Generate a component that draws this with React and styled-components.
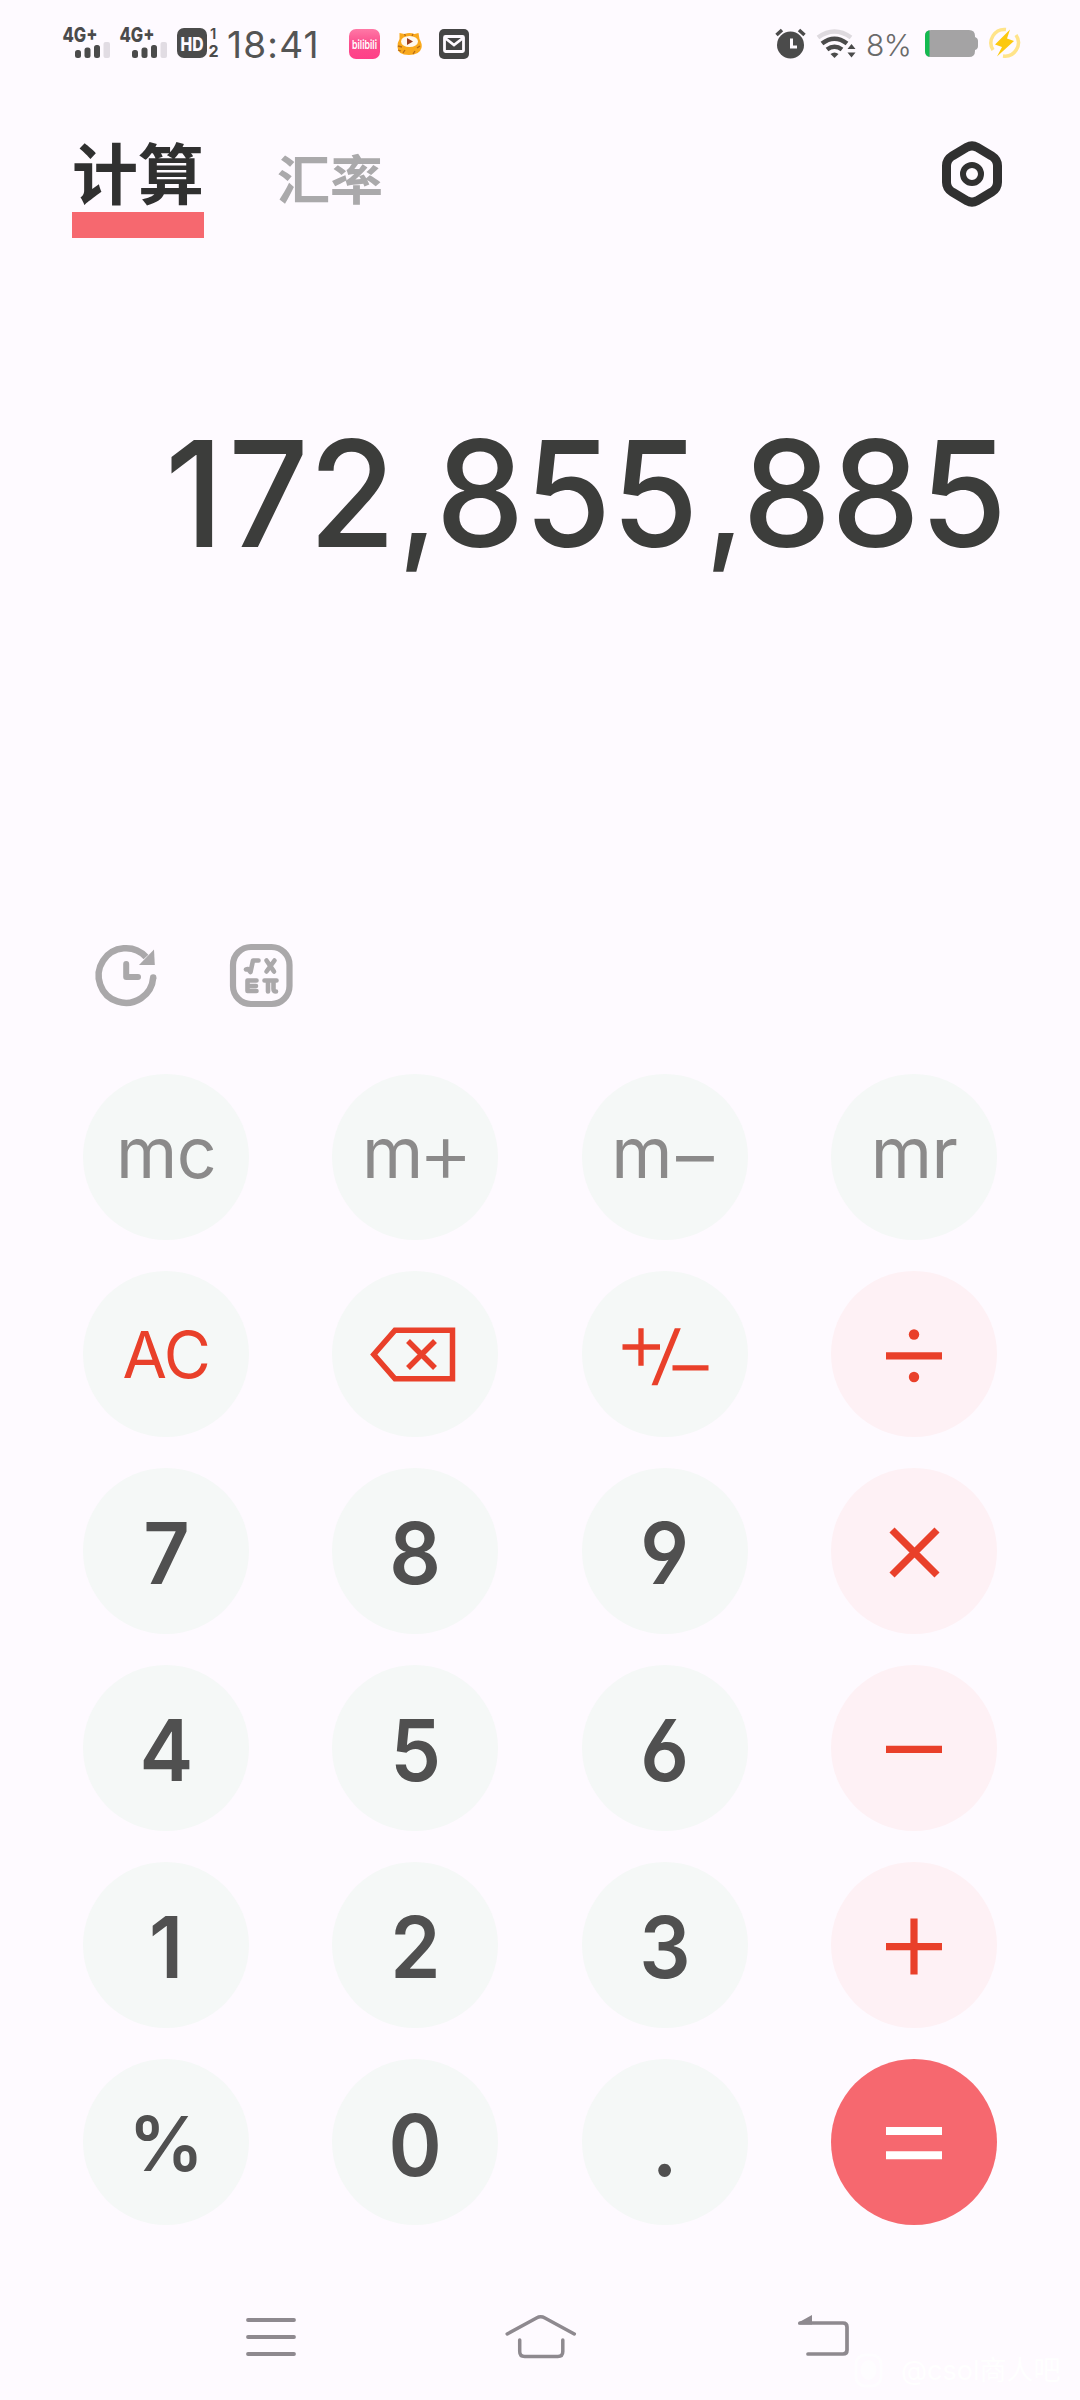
import React from 'react';
import styled, { createGlobalStyle } from 'styled-components';

const GlobalStyle = createGlobalStyle`
  * {
    box-sizing: border-box;
  }

  body {
    margin: 0;
    background: #fefaff;
    font-family: Inter, 'Noto Sans CJK SC', sans-serif;
  }

  svg {
    display: block;
    flex-shrink: 0;
    overflow: visible;
  }
`;

const Screen = styled.div`
  display: flex;
  flex-direction: column;
  width: 1080px;
  height: 2400px;
  overflow: hidden;
  background: #fefaff;
`;

const StatusBar = styled.header`
  display: flex;
  justify-content: space-between;
  height: 88px;
  padding: 0 59px 0 62px;
  color: #4b4b4b;
`;

const StatusGroup = styled.div`
  display: flex;
  align-items: center;
  height: 88px;
`;

const Clock = styled.span`
  width: 125px;
  padding: 2px 0 0 3px;
  font-size: 37px;
  line-height: 86px;
  letter-spacing: 1.2px;
  white-space: nowrap;
  color: #545454;
`;

const BatteryText = styled.span`
  width: 67px;
  padding: 2px 0 0 9px;
  font-size: 30px;
  font-weight: 300;
  line-height: 88px;
  letter-spacing: -0.5px;
  white-space: nowrap;
  color: #6a6a6a;
`;

const TopBar = styled.div`
  display: flex;
  justify-content: space-between;
  height: 152px;
  padding: 0 78px 0 72px;
`;

const Tabs = styled.nav`
  display: flex;
  gap: 73px;
`;

const Tab = styled.div`
  height: 150px;
  padding-top: ${({ $active }) => ($active ? '44px' : '56px')};
  font-size: ${({ $active }) => ($active ? '66px' : '53px')};
  font-weight: 700;
  line-height: ${({ $active }) => ($active ? '80px' : '74px')};
  color: ${({ $active }) => ($active ? '#303030' : '#aaa9ab')};
  border-bottom: ${({ $active }) => ($active ? '26px solid #f6686f' : '0')};
`;

const ActiveLabel = styled.span`
  display: block;
  height: 80px;
  line-height: 86px;
`;

const SettingsButton = styled.div`
  padding-top: 53px;
`;

const Display = styled.div`
  height: 704px;
  padding: 164px 0 0 0;
  margin-right: 73px;
  font-size: 147.5px;
  font-weight: 450;
  line-height: 180px;
  text-align: right;
  white-space: nowrap;
  color: #3c3d3b;
  transform: scaleX(0.955);
  transform-origin: right center;
`;

const LeadDigit = styled.span`
  margin-right: 5px;
`;

const Comma = styled.span`
  margin: 0 -2px 0 ${({ $gap }) => $gap}px;
  font-size: 0.92em;
  line-height: 0;
`;

const Tools = styled.div`
  display: flex;
  gap: 73px;
  height: 129.6px;
  padding-left: 95px;
`;

const Keypad = styled.div`
  display: grid;
  grid-template-columns: repeat(4, 166px);
  grid-auto-rows: 166px;
  column-gap: 83.3px;
  row-gap: 31.1px;
  width: 914px;
  margin-left: 83.2px;
`;

const keyBackgrounds = {
  plain: '#f5f8f7',
  operator: '#fef1f5',
  equals: '#f6686f',
};

const Key = styled.button`
  display: flex;
  align-items: center;
  justify-content: center;
  width: 166px;
  height: 166px;
  padding: 0;
  border: 0;
  border-radius: 50%;
  font-family: inherit;
  color: ${({ $kind }) => ($kind === 'equals' ? '#fff' : '#e9402a')};
  background: ${({ $kind }) => keyBackgrounds[$kind]};
`;

const MemoryLabel = styled.span`
  padding-bottom: 8px;
  font-size: 70px;
  font-weight: 400;
  line-height: 84px;
  letter-spacing: -0.5px;
  white-space: nowrap;
  color: #8b8a8a;
`;

const Sign = styled.span`
  margin: 0 -4px 0 -5px;
  font-size: 1.22em;
  font-weight: 300;
  line-height: 0;
  vertical-align: -5px;
`;

const ClearLabel = styled.span`
  padding-top: 3px;
  font-size: 64.5px;
  font-weight: 400;
  line-height: 80px;
  letter-spacing: -1px;
`;

const DigitLabel = styled.span`
  padding-top: 7px;
  font-size: 85px;
  font-weight: 600;
  line-height: 104px;
  font-feature-settings: 'cv03', 'cv04';
  color: #505050;
  transform: scaleX(0.95);
`;

const PercentLabel = styled(DigitLabel)`
  padding-top: 4px;
  font-size: 75px;
  font-weight: 600;
  transform: none;
`;

const NavBar = styled.footer`
  display: flex;
  align-items: flex-start;
  height: 175px;
  padding: 84px 0 0 242px;
`;

const NavItem = styled.div`
  flex-shrink: 0;
  width: ${({ $width }) => $width}px;
`;

const Watermark = styled.div`
  display: flex;
  align-items: center;
  gap: 18px;
  padding-top: 42px;
  font-size: 27px;
  line-height: 40px;
  white-space: nowrap;
  color: #fff;
`;

const Signal = () => (
  <svg width="57" height="36" viewBox="0 0 57 36">
    <text x="0.5" y="16" fontSize="20" fontWeight="800" textLength="35" lengthAdjust="spacingAndGlyphs" fill="#4b4b4b">4G+</text>
    <rect x="13" y="24" width="6" height="8" rx="2.5" fill="#4b4b4b" />
    <rect x="22.5" y="21.5" width="6" height="10.5" rx="2.5" fill="#4b4b4b" />
    <rect x="32" y="19" width="6" height="13" rx="2.5" fill="#4b4b4b" />
    <rect x="41.5" y="16" width="6.5" height="16" rx="2" fill="#e1dce3" />
  </svg>
);

const HdBadge = () => (
  <svg width="48" height="40" viewBox="0 0 48 40">
    <rect x="1" y="4" width="30" height="30" rx="7" fill="#4b4b4b" />
    <text x="4.5" y="26.5" fontSize="19" fontWeight="800" textLength="23" lengthAdjust="spacingAndGlyphs" fill="#fefaff">HD</text>
    <text x="34" y="15" fontSize="15" fontWeight="600" fill="#4b4b4b">1</text>
    <text x="32.5" y="33" fontSize="16" fontWeight="700" fill="#4b4b4b">2</text>
  </svg>
);

const Bilibili = () => (
  <svg width="47" height="32" viewBox="0 0 47 32">
    <defs>
      <linearGradient id="pink" x1="0" y1="0" x2="0" y2="1">
        <stop offset="0" stopColor="#ff78a6" />
        <stop offset="0.5" stopColor="#fb4d8c" />
        <stop offset="1" stopColor="#ff3f88" />
      </linearGradient>
    </defs>
    <rect x="0" y="1" width="31" height="30" rx="7" fill="url(#pink)" />
    <text x="3" y="20.5" fontSize="12" fontWeight="600" textLength="25" lengthAdjust="spacingAndGlyphs" fill="#fff">bilibili</text>
  </svg>
);

const Cat = () => (
  <svg width="43" height="32" viewBox="0 0 43 32">
    <path d="M3.5 5l5 1q5-2 10 0l4-1 1 6q3 5 2 9-2 7-12.5 7-11.5 0-11.5-8 0-5 2-8z" fill="#f9a91e" />
    <path d="M2 18l4 1M2 22l3 1M24 18l-3 2M7 25l2-3M17 26l2-3M8.5 6l1 2M17 6l-1 2" stroke="#b56a17" strokeWidth="1.3" />
    <ellipse cx="13.5" cy="13.5" rx="8.5" ry="5.5" fill="#fff8ef" />
    <path d="M11 10l6 3.5-6 3.5z" fill="#9b3d20" />
  </svg>
);

const Mail = () => (
  <svg width="31" height="32" viewBox="0 0 31 32">
    <rect x="0" y="1" width="30" height="30" rx="5" fill="#454545" />
    <rect x="5.5" y="8.5" width="19" height="15" rx="1" fill="none" stroke="#fefaff" strokeWidth="2.8" />
    <path d="M6 10l9 7 9-7" fill="none" stroke="#fefaff" strokeWidth="2.8" />
  </svg>
);

const Alarm = () => (
  <svg width="42" height="32" viewBox="0 0 42 32">
    <circle cx="15.5" cy="17" r="13.5" fill="#4b4b4b" />
    <path d="M1.5 7l5.5-5M29.5 7L24 2" stroke="#4b4b4b" strokeWidth="3.5" />
    <path d="M16.5 10.5V19H22" fill="none" stroke="#fefaff" strokeWidth="3" />
  </svg>
);

const Wifi = () => (
  <svg width="40" height="32" viewBox="0 0 40 32">
    <path d="M1 9.5Q17.5-2.5 34 9.5" fill="none" stroke="#dedadf" strokeWidth="4.5" />
    <path d="M5 15.5Q17.5 6 30 15.5" fill="none" stroke="#4b4b4b" strokeWidth="4.5" />
    <path d="M10 21.5Q17.5 16 25 21.5" fill="none" stroke="#4b4b4b" strokeWidth="4.5" />
    <path d="M13.5 26q4-3 8 0l-4 4z" fill="#4b4b4b" />
    <path d="M34.5 16l4 5h-8zM34.5 29.5l4-5h-8z" fill="#4b4b4b" />
  </svg>
);

const Battery = () => (
  <svg width="65" height="32" viewBox="0 0 65 32">
    <path d="M7 2h38q6 0 6 6v1q3 1 3 4v5q0 3-3 4v1q0 6-6 6H7q-6 0-6-6V8q0-6 6-6z" fill="#a4a3a4" />
    <path d="M5.5 2.2V28.8Q1 28 1 23V8q0-5 4.5-5.8z" fill="#13ba50" />
  </svg>
);

const Bolt = () => (
  <svg width="32" height="32" viewBox="0 0 32 32">
    <path d="M17 1.5A13.5 13.5 0 0 0 4 22M27 7A13.5 13.5 0 0 1 14 28" fill="none" stroke="#ffe48a" strokeWidth="3.5" />
    <path d="M21 1.500L6 16.500l7 2.500-5 9.500 17-15.500-7-2.500z" fill="#fcc90f" />
  </svg>
);

const Settings = () => (
  <svg width="60" height="68" viewBox="0 0 60 68">
    <path
      d="M25 6.2q5-2.6 10 0l14.5 8.6q6 3.8 6 10v16.400q0 6.2-6 10L35 59.8q-5 2.6-10 0L10.5 51.2q-6-3.8-6-10V24.8q0-6.2 6-10z"
      fill="none"
      stroke="#303030"
      strokeWidth="9"
    />
    <circle cx="30" cy="33" r="9" fill="none" stroke="#303030" strokeWidth="6" />
  </svg>
);

const History = () => (
  <svg width="62" height="64" viewBox="0 0 62 64">
    <path d="M58.2 33.5A27.3 27.3 0 1 1 51 13" fill="none" stroke="#aaa8aa" strokeWidth="6.5" />
    <circle cx="58.2" cy="33.5" r="3.2" fill="#aaa8aa" />
    <path d="M59 5.5L59.8 21H44z" fill="#aaa8aa" />
    <path d="M31.2 20v13H43" fill="none" stroke="#aaa8aa" strokeWidth="6" strokeLinecap="round" strokeLinejoin="round" />
  </svg>
);

const Formula = () => (
  <svg width="64" height="64" viewBox="0 0 64 64">
    <rect x="3" y="3" width="56.5" height="57" rx="18" fill="none" stroke="#aaa8aa" strokeWidth="6.2" />
    <g fill="none" stroke="#aaa8aa" strokeWidth="4.6" strokeLinecap="round" strokeLinejoin="round">
      <path d="M16 25.5l2-.5 2.5 3 2.5-11.5h5.5" />
      <path d="M36.5 16.5l7.5 11M44.500 16.5l-8 11" />
      <path d="M26.500 36.500h-9v10.500h9M17.500 42h8.500" />
      <path d="M34.5 36.5h12M38 37v10.5M43.5 37v8q0 2.5 2.500 2.5" />
    </g>
  </svg>
);

const Backspace = () => (
  <svg width="166" height="166" viewBox="0 0 166 166" fill="none" stroke="currentColor" strokeWidth="5.5">
    <path d="M63 59.2h57.5v48.6H63L41.8 83.5z" />
    <path d="M76 70l27 27M103 70L76 97" />
  </svg>
);

const PlusMinus = () => (
  <svg width="166" height="166" viewBox="0 0 166 166" fill="none" stroke="currentColor" strokeWidth="5.3">
    <path d="M40.5 76H78M59 57.2v37.6" />
    <path d="M90.5 96.8h36" />
    <path d="M92.8 57.2h6l-23.3 57h-6z" fill="currentColor" stroke="none" />
  </svg>
);

const operatorPaths = {
  divide: 'M55 84.8h56',
  multiply: 'M61 62l45 45M106 62L61 107',
  minus: 'M55 84.3h56',
  plus: 'M55 84.6h56M83 56.6v56',
  equals: 'M55 72h56M55 96.3h56',
};

const Operator = ({ name }) => (
  <svg width="166" height="166" viewBox="0 0 166 166" fill="none" stroke="currentColor" strokeWidth={name === 'equals' ? 8 : 7.2}>
    <path d={operatorPaths[name]} />
    {name === 'divide' && (
      <g fill="currentColor" stroke="none">
        <circle cx="83" cy="63.5" r="5.2" />
        <circle cx="83" cy="106" r="5.2" />
      </g>
    )}
  </svg>
);

const Menu = () => (
  <svg width="60" height="60" viewBox="0 0 60 60" stroke="#8e898f" strokeWidth="3.8" strokeLinecap="round">
    <path d="M6 11h46M6 28h46M6 45h46" />
  </svg>
);

const Home = () => (
  <svg width="80" height="60" viewBox="0 0 80 60" fill="none" stroke="#8e898f" strokeWidth="3.5" strokeLinecap="round">
    <path d="M6.2 25L35.5 9q4.2-2.3 8.4 0L73.3 25" />
    <path d="M18.7 31v11.5q0 5 5 5h33.1q5 0 5-5V31" />
  </svg>
);

const Back = () => (
  <svg width="60" height="60" viewBox="0 0 60 60">
    <path d="M8 14h43q4 0 4 4v23q0 4-4 4H16" fill="none" stroke="#8e898f" strokeWidth="3.7" strokeLinecap="round" />
    <path d="M20 6v9.5H6.5q-1-1 0-2z" fill="#8e898f" />
  </svg>
);

const WatermarkLogo = () => (
  <svg width="29" height="36" viewBox="0 0 29 36" opacity="0.6">
    <rect x="2" y="2" width="25" height="31" rx="9" fill="none" stroke="#fff" strokeWidth="3" />
    <ellipse cx="14.5" cy="17" rx="8" ry="10" fill="#fff" />
  </svg>
);

const App = () => {
  return (
    <>
      <GlobalStyle />
      <Screen>
        <StatusBar>
          <StatusGroup>
            <Signal />
            <Signal />
            <HdBadge />
            <Clock>18:41</Clock>
            <Bilibili />
            <Cat />
            <Mail />
          </StatusGroup>
          <StatusGroup>
            <Alarm />
            <Wifi />
            <BatteryText>8%</BatteryText>
            <Battery />
            <Bolt />
          </StatusGroup>
        </StatusBar>

        <TopBar>
          <Tabs>
            <Tab $active><ActiveLabel>计算</ActiveLabel></Tab>
            <Tab>汇率</Tab>
          </Tabs>
          <SettingsButton>
            <Settings />
          </SettingsButton>
        </TopBar>

        <Display>
          <LeadDigit>1</LeadDigit>72<Comma $gap={3}>,</Comma>855<Comma $gap={7}>,</Comma>885
        </Display>

        <Tools>
          <History />
          <Formula />
        </Tools>

        <Keypad>
          <Key $kind="plain"><MemoryLabel>mc</MemoryLabel></Key>
          <Key $kind="plain"><MemoryLabel>m<Sign>+</Sign></MemoryLabel></Key>
          <Key $kind="plain"><MemoryLabel>m<Sign>−</Sign></MemoryLabel></Key>
          <Key $kind="plain"><MemoryLabel>mr</MemoryLabel></Key>

          <Key $kind="plain"><ClearLabel>AC</ClearLabel></Key>
          <Key $kind="plain"><Backspace /></Key>
          <Key $kind="plain"><PlusMinus /></Key>
          <Key $kind="operator"><Operator name="divide" /></Key>

          <Key $kind="plain"><DigitLabel>7</DigitLabel></Key>
          <Key $kind="plain"><DigitLabel>8</DigitLabel></Key>
          <Key $kind="plain"><DigitLabel>9</DigitLabel></Key>
          <Key $kind="operator"><Operator name="multiply" /></Key>

          <Key $kind="plain"><DigitLabel>4</DigitLabel></Key>
          <Key $kind="plain"><DigitLabel>5</DigitLabel></Key>
          <Key $kind="plain"><DigitLabel>6</DigitLabel></Key>
          <Key $kind="operator"><Operator name="minus" /></Key>

          <Key $kind="plain"><DigitLabel>1</DigitLabel></Key>
          <Key $kind="plain"><DigitLabel>2</DigitLabel></Key>
          <Key $kind="plain"><DigitLabel>3</DigitLabel></Key>
          <Key $kind="operator"><Operator name="plus" /></Key>

          <Key $kind="plain"><PercentLabel>%</PercentLabel></Key>
          <Key $kind="plain"><DigitLabel>0</DigitLabel></Key>
          <Key $kind="plain"><DigitLabel>.</DigitLabel></Key>
          <Key $kind="equals"><Operator name="equals" /></Key>
        </Keypad>

        <NavBar>
          <NavItem $width={259}><Menu /></NavItem>
          <NavItem $width={291}><Home /></NavItem>
          <NavItem $width={62}><Back /></NavItem>
          <Watermark>
            <WatermarkLogo />
            @csol商人吧
          </Watermark>
        </NavBar>
      </Screen>
    </>
  );
};

export default App;
